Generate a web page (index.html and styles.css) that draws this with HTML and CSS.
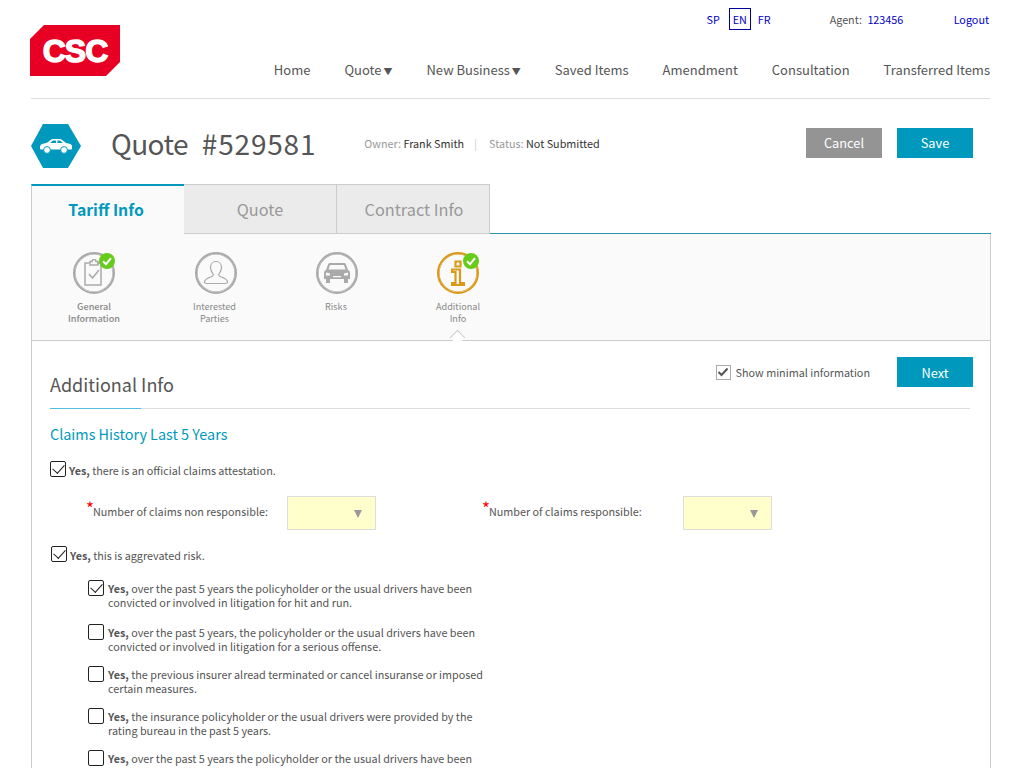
FILE: index.html
```html
<!DOCTYPE html>
<html lang="en">
<head>
<meta charset="utf-8">
<title>Quote #529581</title>
<link rel="stylesheet" href="styles.css">
</head>
<body>
<div class="page">
  <header class="header">
    <svg class="logo" width="90" height="51" viewBox="0 0 90 51"><polygon points="14,0 90,0 90,37 76,51 0,51 0,14" fill="#e80024"/><text x="45" y="37" text-anchor="middle" class="logo-text">CSC</text></svg>
    <div class="header-right">
      <div class="util">
        <div class="langs"><a class="lang">SP</a><a class="lang lang-on">EN</a><a class="lang">FR</a></div>
        <div class="agent">Agent: <a class="agent-id">123456</a></div>
        <a class="logout">Logout</a>
      </div>
      <nav class="nav">
        <span>Home</span><span>Quote <i class="caret">▼</i></span><span>New Business <i class="caret">▼</i></span><span>Saved Items</span><span>Amendment</span><span>Consultation</span><span>Transferred Items</span>
      </nav>
    </div>
  </header>

  <section class="titlebar">
    <svg class="hex" width="50" height="44" viewBox="0 0 50 44"><polygon points="12,0 37,0 50,22 37,44 12,44 0,22" fill="#0099bd"/><g class="hex-car"><path d="M9 25.500c0-2.500 1-3.500 4-4l3-.7 3.500-2.800c1-.7 2-1 3.500-1h5c1.500 0 2.500.5 3.500 1.200l3.500 2.700c3.500.4 6 1.400 6 3.100v2.500c0 .5-.5 1-1 1H10c-.5 0-1-.5-1-1z" fill="#fff"/><circle cx="16" cy="28" r="3.400" fill="#fff" stroke="#0099bd"/><circle cx="33" cy="28" r="3.400" fill="#fff" stroke="#0099bd"/><path d="M19 21l3-2.500h3v2.500zM26.500 18.500h2.500l3 2.500h-5.500z" fill="#0099bd"/></g></svg>
    <h1 class="title"><span class="title-word">Quote</span><span class="title-num">#529581</span></h1>
    <div class="meta"><span class="meta-l">Owner:</span> Frank Smith<span class="sep">|</span><span class="meta-l">Status:</span> Not Submitted</div>
    <div class="actions"><button class="btn btn-grey">Cancel</button><button class="btn btn-teal">Save</button></div>
  </section>

  <div class="tabs">
    <div class="tab tab-on">Tariff Info</div>
    <div class="tab">Quote</div>
    <div class="tab">Contract Info</div>
    <div class="tab-rest"></div>
  </div>

  <div class="panel">
    <div class="steps">
      <div class="step step-a">
        <div class="ring">
          <svg width="22" height="28" viewBox="0 0 22 28"><path d="M6 4H2v22h16V4h-4M7 2.500h2a2 2 0 0 1 4 0h2V6H7z" fill="none" stroke="#aaa" stroke-width="1.500"/><path d="M6 15l3.500 4L16 11" fill="none" stroke="#aaa" stroke-width="1.600"/></svg>
          <svg class="ok" width="16" height="16" viewBox="0 0 16 16"><circle cx="8" cy="8" r="8" fill="#66cc1a"/><path d="M4 8.200l3 3 5-6" fill="none" stroke="#fff" stroke-width="2"/></svg>
        </div>
        <div class="step-label step-bold">General<br>Information</div>
      </div>
      <div class="step step-b">
        <div class="ring">
          <svg width="26" height="26" viewBox="0 0 26 26"><path d="M13 1.500c3.500 0 5.500 2.800 5.500 6s-1.500 5-2.500 6.500c-.6 1 0 2 1.500 2.600 3.500 1.300 7 2.500 7 5.400 0 1-.8 1.500-2 1.500H3.500c-1.200 0-2-.5-2-1.500 0-2.900 3.500-4.100 7-5.400 1.500-.6 2.100-1.600 1.500-2.600-1-1.500-2.500-3.300-2.500-6.500s2-6 5.500-6z" fill="none" stroke="#aaa" stroke-width="1.200"/></svg>
        </div>
        <div class="step-label">Interested<br>Parties</div>
      </div>
      <div class="step step-c">
        <div class="ring">
          <svg width="26" height="22" viewBox="0 0 26 22"><path d="M6 1h14c1 0 1.600.5 2 1.500L24 8c1.200.6 2 1.500 2 3v6h-2v4h-4v-4H6v4H2v-4H0v-6c0-1.500.8-2.400 2-3l2-5.500C4.400 1.500 5 1 6 1z" fill="#aaa"/><path d="M6 3h14l1.500 4.500h-17zM2 10.500l4 1v2H2zM24 10.500l-4 1v2h4zM9 14h8v1.200H9z" fill="#fafafa"/></svg>
        </div>
        <div class="step-label">Risks</div>
      </div>
      <div class="step step-d">
        <div class="ring ring-on">
          <svg class="info" width="14" height="26" viewBox="0 0 14 26"><path d="M4.500 1.500h5v5h-5zM1 9.500h8V23h4v2H1v-2h3.500V12H1z" fill="#fafafa" stroke="#d99a1c" stroke-width="2.200"/></svg>
          <svg class="ok" width="16" height="16" viewBox="0 0 16 16"><circle cx="8" cy="8" r="8" fill="#66cc1a"/><path d="M4 8.200l3 3 5-6" fill="none" stroke="#fff" stroke-width="2"/></svg>
        </div>
        <div class="step-label">Additional<br>Info</div>
        <span class="pointer"></span>
      </div>
    </div>

    <div class="content">
      <div class="section-head">
        <h2 class="section-title">Additional Info</h2>
        <div class="section-tools">
          <label class="minimal"><span class="mini-box"><svg width="12" height="10" viewBox="0 0 12 10"><path d="M1.500 5l3 3 6-6.500" fill="none" stroke="#555" stroke-width="2"/></svg></span>Show minimal information</label>
          <button class="btn btn-teal">Next</button>
        </div>
      </div>

      <h3 class="sub">Claims History Last 5 Years</h3>

      <div class="check check-first"><span class="box box-on"></span><p><b>Yes,</b> there is an official claims attestation.</p></div>

      <div class="fields">
        <div class="field field-1"><label class="field-label"><em class="req">*</em>Number of claims non responsible:</label><div class="select"><span class="arrow"></span></div></div>
        <div class="field field-2"><label class="field-label"><em class="req">*</em>Number of claims responsible:</label><div class="select"><span class="arrow"></span></div></div>
      </div>

      <div class="check check-second"><span class="box box-on"></span><p><b>Yes,</b> this is aggrevated risk.</p></div>

      <div class="sublist">
        <div class="check"><span class="box box-on"></span><p><b>Yes,</b> over the past 5 years the policyholder or the usual drivers have been convicted or involved in litigation for hit and run.</p></div>
        <div class="check"><span class="box"></span><p><b>Yes,</b> over the past 5 years, the policyholder or the usual drivers have been convicted or involved in litigation for a serious offense.</p></div>
        <div class="check"><span class="box"></span><p><b>Yes,</b> the previous insurer alread terminated or cancel insuranse or imposed certain measures.</p></div>
        <div class="check"><span class="box"></span><p><b>Yes,</b> the insurance policyholder or the usual drivers were provided by the rating bureau in the past 5 years.</p></div>
        <div class="check"><span class="box"></span><p><b>Yes,</b> over the past 5 years the policyholder or the usual drivers have been</p></div>
      </div>
    </div>
  </div>
</div>
</body>
</html>
```
FILE: styles.css
```css
* { box-sizing: border-box; }
html, body { margin: 0; height: 768px; overflow: hidden; background: #fff; }
body { font-family: "Noto Sans CJK SC", "Source Sans Pro", "Open Sans", sans-serif; color: #555; }
.page { width: 960px; margin-left: 31px; }

.header { display: flex; justify-content: space-between; height: 99px; margin-right: 1px; border-bottom: 1px solid #ddd; }
.logo { margin: 25px 0 0 -1px; flex: none; }
.logo-text { font-family: "Liberation Sans", sans-serif; font-weight: 700; font-size: 32px; fill: #fff; stroke: #fff; stroke-width: 1.400px; letter-spacing: -1px; }
.header-right { display: flex; flex-direction: column; align-items: flex-end; }
.util { display: flex; align-items: center; height: 22px; margin: 8px 1px 0 0; font-size: 10.800px; line-height: 20px; }
.langs { display: flex; align-items: center; margin-right: 59px; }
.lang { color: #0000c8; }
.lang-on { height: 22px; width: 22px; line-height: 20px; margin: 0 7px 0 9px; border: 1px solid #0000a0; text-align: center; }
.agent { width: 124px; color: #555; }
.agent-id { color: #0000c8; margin-left: 3px; }
.logout { color: #0000c8; }
.nav { display: flex; gap: 34px; margin-top: 29px; font-size: 13px; line-height: 22px; color: #555; }
.caret { font-style: normal; font-size: 9px; margin-left: -1px; }

.titlebar { display: flex; align-items: center; height: 85px; padding-top: 6px; }
.hex { flex: none; margin-top: 3px; }
.hex-car { transform: translateY(-2px); }
.title { margin: -3px 0 0 30px; font-size: 28px; font-weight: 400; line-height: 40px; color: #555; letter-spacing: .8px; }
.title-word { letter-spacing: -.6px; }
.title-num { margin-left: 14px; }
.meta { margin: -4px 0 0 48px; font-size: 10.800px; line-height: 18px; color: #333; }
.meta-l { color: #999; }
.sep { color: #ccc; margin: 0 12px 0 10px; }
.actions { display: flex; gap: 15px; margin-left: auto; margin-right: 18px; margin-top: -4px; }
.btn { width: 76px; height: 30px; border: 0; padding: 0; font: inherit; font-size: 12.800px; color: #fff; }
.btn-grey { background: #949494; }
.btn-teal { background: #0099bd; }

.tabs { display: flex; height: 50px; }
.tab { width: 153px; height: 50px; font-size: 16.300px; line-height: 48px; text-align: center; color: #999; background: #ebebeb; border: 1px solid #ccc; border-left: 0; }
.tab:nth-child(3) { padding-left: 2px; }
.tab-on { padding-right: 4px; color: #0099bd; background: #fafafa; font-weight: 700; font-size: 15.800px; border: 0; border-top: 2px solid #0099bd; border-left: 1px solid #ccc; line-height: 48px; }
.tab-rest { flex: 1; height: 50px; border-bottom: 1px solid #2a93ad; }

.panel { border: 1px solid #ccc; border-width: 0 1px; height: 540px; overflow: hidden; }
.steps { position: relative; height: 107px; background: #fafafa; border-bottom: 1px solid #ccc; display: flex; }
.step { position: absolute; top: 18px; width: 100px; display: flex; flex-direction: column; align-items: center; }
.step-a { left: 12px; }
.step-b { left: 134px; }
.step-c { left: 255px; }
.step-d { left: 376px; }
.step-b .step-label { margin-left: -3px; }
.step-c .step-label { margin-left: -2px; }
.ring { position: relative; width: 42px; height: 42px; border: 2px solid #aaa; box-shadow: inset 0 0 0 .6px #aaa; border-radius: 50%; display: flex; align-items: center; justify-content: center; background: #fafafa; }
.ring-on { border-color: #d99a1c; box-shadow: inset 0 0 0 .6px #d99a1c; }
.info { margin-right: 1px; }
.ok { position: absolute; top: -1px; right: -2px; }
.step-label { margin-top: 6px; font-size: 9.100px; line-height: 12px; text-align: center; color: #888; }
.step-bold { font-weight: 500; }
.pointer { position: absolute; top: 80px; left: 44px; width: 11px; height: 11px; background: #fff; border-left: 1px solid #ccc; border-top: 1px solid #ccc; transform: rotate(45deg); }

.content { padding: 16px 20px 0 18px; background: #fff; }
.section-head { display: flex; justify-content: space-between; height: 52px; border-bottom: 1px solid #ddd; position: relative; }
.section-head::after { content: ""; position: absolute; left: 0; bottom: -1px; width: 91px; height: 1px; background: #4fc0dc; }
.section-title { margin: 13px 0 0; font-size: 18px; font-weight: 400; line-height: 28px; color: #555; }
.section-tools { display: flex; align-items: flex-start; margin-right: -3px; }
.minimal { display: flex; align-items: center; height: 30px; font-size: 10.800px; color: #555; margin-right: 27px; }
.mini-box { width: 15px; height: 15px; border: 1px solid #aaa; display: flex; align-items: center; justify-content: center; margin-right: 5px; }
.sub { margin: 15px 0 0; font-size: 14.400px; font-weight: 400; line-height: 20px; color: #0099bd; }

.check { display: flex; align-items: flex-start; font-size: 10.800px; line-height: 14px; }
.check p { margin: 1px 0 0; width: 380px; }
.check b { font-weight: 700; }
.box { flex: none; position: relative; width: 16px; height: 16px; margin-right: 4px; border: 1px solid #222; border-radius: 2px; background: #fff; }
.box-on::after { content: ""; position: absolute; left: 2px; top: 2px; width: 10px; height: 6px; border-left: 1px solid #222; border-bottom: 1px solid #222; transform: rotate(-48deg); }
.check-first { margin-top: 17px; }
.check-first p, .check-second p { margin-top: 2px; }
.check-first .box, .check-second .box { margin-right: 3px; }

.fields { position: relative; height: 34px; margin-top: 19px; }
.field { position: absolute; top: 0; display: flex; align-items: center; font-size: 10.800px; }
.field-1 { left: 36px; }
.field-2 { left: 432px; }
.field-label { width: 201px; padding-bottom: 4px; line-height: 16px; }
.req { font-style: normal; color: #f00; font-size: 17px; line-height: 10px; vertical-align: 1px; margin-right: -1px; }
.select { position: relative; width: 89px; height: 34px; background: #ffffcc; border: 1px solid #ddd; }
.arrow { position: absolute; right: 13px; top: 13px; width: 0; height: 0; border-left: 4px solid transparent; border-right: 4px solid transparent; border-top: 8px solid #999; }
.check-second { margin-top: 16px; margin-left: 1px; }
.sublist { margin: 18px 0 0 38px; display: flex; flex-direction: column; gap: 13px; }
.sublist .check:nth-child(2) { margin-top: 2px; }
```
